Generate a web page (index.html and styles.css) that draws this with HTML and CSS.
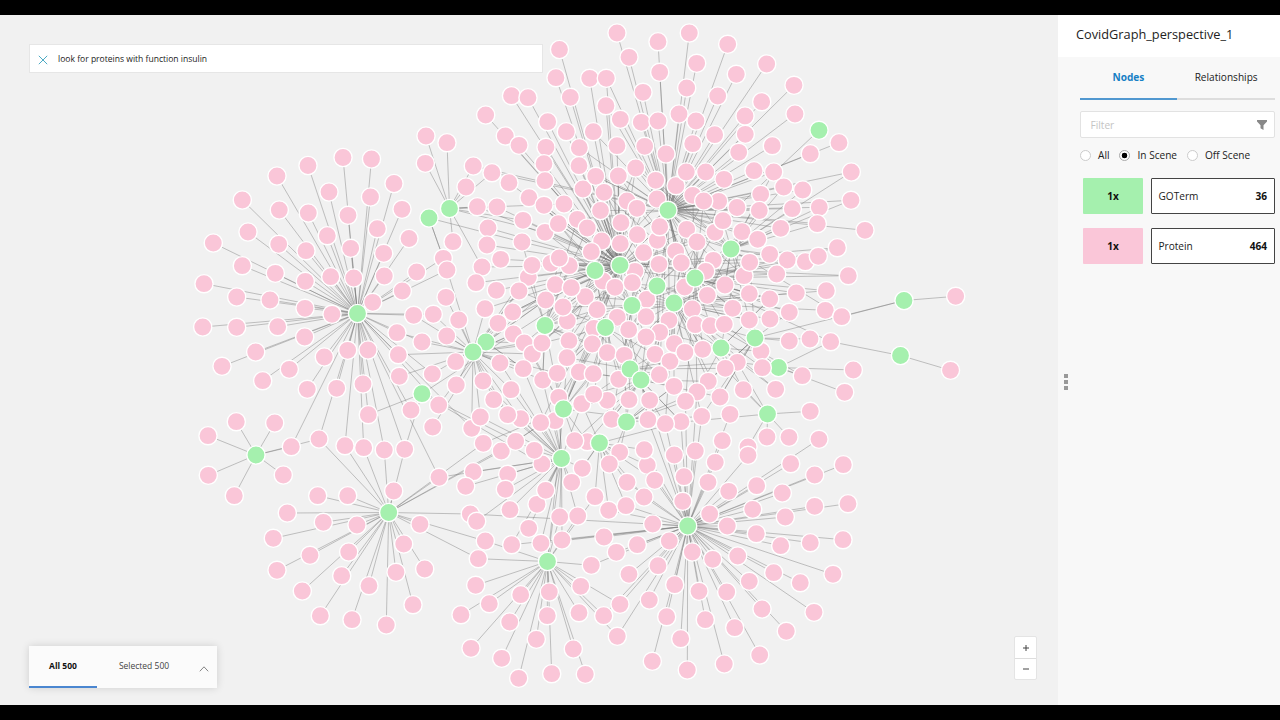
FILE: index.html
```html
<!DOCTYPE html>
<html lang="en">
<head>
<meta charset="utf-8">
<title>CovidGraph_perspective_1</title>
<link rel="stylesheet" href="styles.css">
</head>
<body>
<div class="app">
  <main class="scene">
    <svg class="graph" viewBox="0 15 1057 690"><g class="edges"></g><g class="nodes"></g></svg>
    <div class="search">
      <svg class="search-clear" viewBox="0 0 10 10"><path d="M.8.8l8.4 8.4M9.2.8L.8 9.2"/></svg>
      <span class="search-text">look for proteins with function insulin</span>
    </div>
    <div class="summary">
      <div class="summary-tab summary-tab-active">All 500</div>
      <div class="summary-tab">Selected 500</div>
      <svg class="summary-toggle" viewBox="0 0 10 6"><path d="M.8 5.3L5 .8l4.2 4.5"/></svg>
    </div>
    <div class="zoom">
      <div class="zoom-button"><svg viewBox="0 0 8 8"><path d="M1 4h6M4 1v6"/></svg></div>
      <div class="zoom-button"><svg viewBox="0 0 8 8"><path d="M1 4h6"/></svg></div>
    </div>
  </main>
  <div class="resizer"><i></i><i></i><i></i></div>
  <aside class="panel">
    <h1 class="panel-title">CovidGraph_perspective_1</h1>
    <div class="panel-body">
      <nav class="tabs"><div class="tab tab-active">Nodes</div><div class="tab">Relationships</div></nav>
      <div class="filter"><span>Filter</span><svg viewBox="0 0 10 10"><path d="M0 0h10v1.6L6.5 5.2V10L3.5 8.3V5.2L0 1.6z"/></svg></div>
      <div class="radios">
        <span class="radio"></span><span class="radio-label label-all">All</span>
        <span class="radio radio-checked"></span><span class="radio-label label-in">In Scene</span>
        <span class="radio"></span><span class="radio-label">Off Scene</span>
      </div>
      <div class="category"><div class="swatch swatch-term">1x</div><div class="category-box"><span>GOTerm</span><b>36</b></div></div>
      <div class="category"><div class="swatch swatch-protein">1x</div><div class="category-box"><span>Protein</span><b>464</b></div></div>
    </div>
  </aside>
</div>
<script src="graph.js"></script>
</body>
</html>
```
FILE: styles.css
```css
* { box-sizing: border-box; }
body { margin: 0; background: #000; font-family: "Open Sans", "Noto Sans", sans-serif; color: #222; }
.app { display: flex; width: 1280px; height: 720px; border: solid #000; border-width: 15px 0; background: #f8f8f8; overflow: hidden; }
.scene { position: relative; width: 1058px; background: #f1f1f1; }
.graph { display: block; width: 1057px; height: 690px; }
.edges path { stroke: #777; stroke-opacity: .72; stroke-width: .6; fill: none; }
.nodes circle { fill: #fac6d8; stroke: #fff; stroke-width: 1.4; }
.nodes .term { fill: #a5f0ae; }

.search { position: absolute; left: 29px; top: 29px; width: 514px; height: 29px; display: flex; align-items: center; padding-left: 8px; background: #fff; border: 1px solid #e6e6e6; }
.search-clear { width: 10px; height: 10px; margin-top: 2px; stroke: #4daac4; stroke-width: 1; fill: none; }
.search-text { margin-left: 10px; font-size: 8.55px; line-height: 12px; color: #222; white-space: nowrap; }

.summary { position: absolute; left: 29px; top: 631px; width: 188px; height: 42px; display: flex; background: #fbfbfb; box-shadow: 0 0 8px rgba(0,0,0,.14); }
.summary-tab { width: 94px; padding-top: 13px; font-size: 8.5px; line-height: 14px; text-align: center; color: #444; white-space: nowrap; }
.summary-tab-active { width: 68px; font-weight: 700; color: #111; border-bottom: 2px solid #4a86d0; }
.summary-toggle { width: 10px; height: 6px; margin: 20px 0 0 8px; fill: none; stroke: #777; stroke-width: .9; }

.zoom { position: absolute; left: 1014px; top: 621px; width: 23px; height: 44px; background: #fff; border: 1px solid #e4e4e4; border-radius: 2px; }
.zoom-button { display: flex; align-items: center; justify-content: center; height: 21px; }
.zoom-button + .zoom-button { border-top: 1px solid #ddd; }
.zoom-button svg { width: 8px; height: 8px; stroke: #444; stroke-width: 1; }

.resizer { display: flex; flex-direction: column; align-items: flex-end; justify-content: center; gap: 2px; width: 10px; padding: 44px .5px 0 0; background: linear-gradient(#fff 42px, #f8f8f8 42px); }
.resizer i { width: 4px; height: 4px; background: #999; }
.panel { flex: 1; }
.panel-title { height: 42px; margin: 0; padding-left: 8px; background: #fff; font-size: 12.75px; line-height: 38px; font-weight: 400; color: #222; }
.panel-body { padding: 0 5px 0 11.5px; font-size: 10.1px; }
.tabs { display: flex; height: 43px; }
.tab { flex: 1; padding-top: 12px; line-height: 16px; text-align: center; border-bottom: 2px solid #ddd; }
.tab-active { color: #1680c5; font-weight: 700; border-color: #5198d0; }
.filter { display: flex; align-items: center; justify-content: space-between; height: 27px; margin-top: 11px; padding: 0 7px 0 10px; background: #fff; border: 1px solid #e2e2e2; border-radius: 2px; color: #c4c4c4; }
.filter svg { width: 10px; height: 10px; fill: #888; }
.radios { display: flex; align-items: center; height: 16px; margin-top: 9px; }
.radio { flex: none; width: 11px; height: 11px; border: 1px solid #ccc; border-radius: 50%; background: #fff; }
.radio-checked { border-color: #aaa; background: radial-gradient(circle, #000 2.6px, #fff 3.1px); }
.radio-label { margin-left: 7.5px; white-space: nowrap; }
.label-all { width: 21px; }
.label-in { width: 49px; }
.category { display: flex; gap: 7.5px; height: 36px; margin: 15px 0 0 3.5px; }
.category + .category { margin-top: 14px; }
.swatch { width: 60px; border-radius: 1px; line-height: 36px; text-align: center; font-weight: 700; color: #111; }
.swatch-term { background: #a5f0ae; }
.swatch-protein { background: #fac6d8; }
.category-box { flex: 1; display: flex; align-items: center; justify-content: space-between; padding: 0 7px; background: #fff; border: 1px solid #444; border-radius: 1px; }
.category-box b { color: #111; }
```
FILE: graph.js
```js
// GO terms, keyed by a one-letter id.
const terms = {
  A: [357.5, 313.5], B: [449.5, 208.5], C: [429, 218], D: [256, 455], E: [388.7, 512.5], F: [547.5, 561.5],
  G: [687.7, 526], H: [668, 210.3], I: [620, 265.3], J: [595, 270.5], K: [731, 249], L: [695, 278],
  M: [657, 286], N: [674, 303], O: [632, 305.5], P: [605.5, 327.5], Q: [545, 325.5], R: [486, 342],
  S: [473, 352], T: [422, 393.7], U: [563.5, 409], V: [626.5, 422], W: [599.5, 443], X: [561.5, 458.5],
  Y: [630, 369], Z: [641, 380], a: [721, 348], b: [755, 338], c: [778.5, 367.5], d: [819, 130.3],
  e: [904, 300.5], f: [900.5, 355.5], g: [767.5, 414]
};

// Proteins grouped by the terms they are linked to.
const proteins = [
  ['A', '277,176 308,165.5 343,157.5 371.5,159 394,183.5 242.3,200 329,192 370.5,197 279.3,210 308.3,213 348,215.3 402,209.3 248,232 327.3,235.7 377.3,228.7 409,238.5 213.3,243 278.7,244.3 306,250.7 350.7,248.3 383.7,253.3 242.3,265.7 275.3,273.3 305.3,281.3 330.7,276.7 353.7,278 384.3,276 416.7,272 402.3,291 372.7,302.3 204,283.7 236.7,297 270,300 305,308.3 332,314.3 202.7,327 236.7,327.3 277.7,326.7 304.7,337 255.7,352 222,366.3 262.7,380.7 289.3,369.3 324.3,357 307.3,389.3 347.7,350.3 368,350 336.7,388.3 363,384'],
  ['AT', '368.3,414.7 411,410'], ['ADE', '319,439'], ['AE', '345,445.7 363.7,447.7 384.3,450'], ['AET', '404.7,449.3'],
  ['AS', '397,332.7 422,342 398.3,354.7 433.3,314.3 413.7,315.3'], ['S', '399.3,376.3 446.7,336 455.7,361.7 456.3,385 446,297.3 458.7,320'],
  ['AR', '432.3,374 438.7,405'], ['R', '432.7,427'], ['AC', '443.3,258.3'], ['AS', '447,270'], ['AEX', '439,477.3'],
  ['B', '426,136 447,142.7 425.3,163.3 466,187 453,241.7'], ['BH', '473.3,166 492,172.7'], ['BI', '477.3,206.7 497,207 523,220.3'],
  ['D', '208,435.7 236.3,421.7 274.7,423 208.3,475.3 234.3,495.7 283.3,475'], ['AD', '291.3,446.7'],
  ['E', '317.7,495.7 347.7,495.7 393.7,491 287.3,513 323.3,522.3 357,525 273.3,538.3 310,555.3 348.7,552 403.7,544 420,524.3 277,570.3 302.3,591 341.7,575.7 396,572.3 369,585.7 424.7,569 320.3,615.7 352,619.7 386.3,625 413,604.7'],
  ['I', '559.5,49.5 556,77.7 589.7,78.3 511.5,95.7 528,97.7 570.3,97.3 485.7,115 547.7,121.7 566.3,131.7 505.3,136 519,145.3 546,147.3 617,145.7 544,163.7 545,180.7 509,182.7 583,189 604,192.3 529,197.7 544,205.3 564,204 600.5,210.5 627,201 637,208.3'],
  ['HI', '606.3,78.3 606,105.7 593.3,131.7 579.3,147.7 579,165.7 595.7,176.3 618.3,176 635.7,168'],
  ['H', '617,33 658,41.7 629,57.3 659.7,72.3 643,92.3 620.3,119.3 641.3,122.3 658,121 644.7,146.3 666,154 655.7,180.3 657,199 676,185.7 689.3,33 727.7,44.3 696.7,63.3 766.7,64 736.3,74.3 686.7,88 794,85.3 717.7,96 761.7,101.7 679,114 745,116 696,121 795,114 714.7,134.7 745.3,134.3 692.7,143.7 738.7,152.3 772.3,145.7 839,142.7 810.3,153.7 686.3,172 705.7,172 724,179.3 754,170.7 692.7,195.3 718.7,201.3 703.7,201 737,207.5'],
  ['HK', '773.7,172 760.7,194.3 783.7,187 802.7,190 851.3,172 759.3,210.5 851,200.3 819.3,207.3 792.3,208.7'],
  ['I', '488,228 487,245 522,242 545,232.3 558.3,223.7 577.3,219.3 587.3,228 621,222.7 601.7,241 620.3,243.7 591.3,251.7 637.3,234.7 643.7,252.7 657.3,240.3 659.7,226.7 659,264.3 500.7,259.3 482,267 476,282.7 528.3,277.3 532,265.3 551,263.3 569.3,265.7 559.3,258 496.3,290.3 519,291 555.3,284.7 585.3,296.7 571.3,287.7 603,281 615,287.3 635,271.3 632.3,282.7 545.7,300 597,309.7 646.7,299.3 646,316.7'],
  ['IS', '485,308.7 512.7,312 498,323.3 513.3,334 524.3,343 532.3,354 542,343'],
  ['QI', '567.3,321 563,307 569,340.7'], ['IU', '594,328.3 592.3,344 607.3,352.7 567,357.7 579.3,372'],
  ['NZ', '617.3,317.3 628.7,329.7 669,320.3 659.7,332.3 646,337 624.3,355.3'],
  ['HY', '655,354.3 670,361.3 618.7,379.3 659.3,374.7'], ['SX', '500,363 523.3,368.7 542.7,380 557.3,373.3'], ['UP', '593.3,373.7'],
  ['HN', '686.7,229.3 697,242 675.7,251.3 681.3,263 684.7,287 707.3,295.3 692.3,309'],
  ['HK', '715,232.3 742,231.7 757.7,239.3 780.7,228.3 817.3,223.7'], ['dK', '723,220.7'], ['H', '865,230.3'],
  ['KN', '713.3,260.3 705.7,271.3 744,275.7 749.7,262.3'], ['K', '769.7,254.3 787.3,260'],
  ['LI', '805.3,261.7 818.3,256.3 837.3,247.7 776.7,274 848.3,275.7'],
  ['LN', '725,285 749.3,293.7 769.7,299 796.3,293 826.3,290.7 732.7,308.3'],
  ['N', '825.3,310.3 695.3,324.7 710.3,325.7 724.3,324.3 749.3,320 770,319 674.3,343.7 685,352.3 702.7,349.3'],
  ['Ke', '841.7,316.7'], ['bL', '789.3,312.3'], ['b', '789.3,341 810,339'], ['Lcf', '830.7,341.7'],
  ['ab', '761,351.3'], ['aY', '737.3,362.3 725.3,368.3'], ['cN', '802.3,375.7'], ['c', '853.3,370 844.7,392.3'],
  ['aN', '775.7,389.3'], ['ag', '743.3,389.7'], ['NZ', '708.3,381.3 674,386.3 720,397'], ['GL', '697,392 685.5,401.3'],
  ['e', '955.7,296.3'], ['f', '950.5,370.3'],
  ['SX', '483,381 511,389.7 493.7,399.7'], ['AS', '471.7,428.3'], ['SX', '480.3,417 520.7,418.7 507.7,414.7'],
  ['PU', '558.7,397.3 581.7,403.7 607.3,400.3 593.7,394.3'], ['VZ', '629,399.7 611.7,419.3'], ['YG', '649.7,400.3'],
  ['XI', '555,420.7 540.7,422.7'], ['EU', '483.3,443.3 501.3,451 515.7,441.3'], ['XT', '542,464 534.3,450.3'],
  ['UZ', '587.3,441.7 574.7,440.7'], ['XW', '582.3,468.3 571.7,482.3'], ['VW', '619.7,452.3 609.3,464'],
  ['WG', '647.3,465.3 644.3,449.7 654.7,480.3'], ['X', '473.3,471.7 465.7,486.3 507.7,474.3 505.3,489.3 537,504.3 545.7,490.3 510,509.7'],
  ['WF', '595,496.7'], ['WG', '608.7,510.3 627,482.3 644,497 626,505.7'], ['FX', '559.7,517 577.7,516'],
  ['EG', '470.3,514'], ['X', '476.7,521.3 528.7,528.3'], ['EF', '485.3,541 478.3,558.7'], ['GX', '511.7,544.7 541,543.3 562,540'],
  ['F', '475.7,585.3 520.7,594.7 549.3,592 580.7,586.3 489.3,603.7 461,614.7 509.7,622 547.3,615.7 579,612.7 471,648.3 501.7,658.3 536.3,639.3 573.3,649 518.7,678.3 551.7,673.7 585.3,674.3'],
  ['FG', '591.3,565.3 603.7,615.7 620,604.3 617.3,636.3'],
  ['GZ', '648,419.7 681,421.7'], ['GN', '665.3,423.7 701.7,416.3'], ['G', '730,414.3'],
  ['g', '810.3,411.3 767,437 789,437.3 748,447'],
  ['G', '604,537 616.3,552.3 637.3,544.7 629,574.3 652.7,524 669.3,541 658,565.7 819,439.3 722.3,440.7 748,455.3 674.3,455 695.3,451 715.3,462.3 790.7,463.7 843.3,464.7 684,476.7 708,482.3 814.7,475 756.7,485.7 728.7,491.3 782.3,493 682.7,501.3 814.7,506.3 848,503.7 752.7,509.3 785.3,517 709.7,514 727.3,526 756.3,533.7 780.7,545.7 810.3,542.7 843,539.7 692.3,552 712.7,559.3 737.7,556 773.7,572.7 800.3,582.7 833,574.3 749.3,581.3 674.7,584.7 699,591.3 726.7,592 649.3,600 762,609 814,612.3 666.7,616.7 705.3,619.7 734.7,627.7 786.3,631.3 680.7,638.7 652.3,661.3 687.3,670 724.3,664 759.7,655']
];

const SVG = 'http://www.w3.org/2000/svg';
const edgeLayer = document.querySelector('.edges');
const nodeLayer = document.querySelector('.nodes');

function addNode(x, y, type) {
  const circle = document.createElementNS(SVG, 'circle');
  circle.setAttribute('cx', x);
  circle.setAttribute('cy', y);
  circle.setAttribute('r', 9.1);
  circle.setAttribute('class', type);
  nodeLayer.append(circle);
}

function addEdge(from, to) {
  const path = document.createElementNS(SVG, 'path');
  path.setAttribute('d', `M${from}L${to}`);
  edgeLayer.append(path);
}

const nearTerms = (x, y) => Object.values(terms)
  .map(t => ({ t, d: Math.hypot(t[0] - x, t[1] - y) }))
  .filter(o => o.d > 30 && o.d < 190)
  .sort((p, q) => p.d - q.d);

let index = 0;
for (const [links, points] of proteins) {
  for (const point of points.split(' ')) {
    const [x, y] = point.split(',').map(Number);
    for (const id of links) addEdge([x, y], terms[id]);
    // Proteins in the dense core share several further terms.
    if (Math.hypot(x - 635, y - 300) < 135) {
      const near = nearTerms(x, y);
      addEdge([x, y], near[index % 4].t);
      addEdge([x, y], near[(index + 3) % 7].t);
    }
    addNode(x, y, 'protein');
    index++;
  }
}
addEdge(terms.C, [443.3, 258.3]);
addEdge(terms.B, [482, 267]);
addEdge(terms.X, terms.F);
addEdge(terms.U, terms.F);
addEdge(terms.b, terms.e);
for (const [x, y] of Object.values(terms)) addNode(x, y, 'term');
// This protein lies over the term next to it.
addEdge([762.3, 367.7], terms.N);
addNode(762.3, 367.7, 'protein');
```
